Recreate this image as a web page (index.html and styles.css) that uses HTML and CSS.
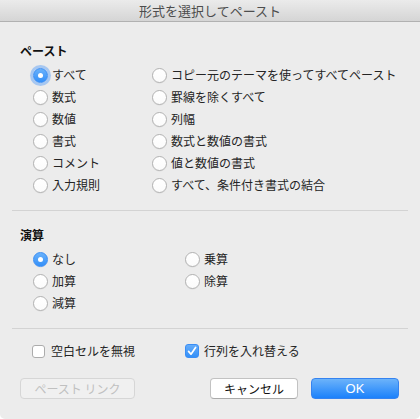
FILE: index.html
```html
<!DOCTYPE html>
<html lang="ja">
<head>
<meta charset="utf-8">
<link rel="stylesheet" href="styles.css">
</head>
<body>
<div class="window">
  <div class="titlebar">形式を選択してペースト</div>
  <div class="section paste">
    <div class="heading">ペースト</div>
    <div class="grid grid-paste">
      <label class="opt"><span class="radio on focus"></span>すべて</label>
      <label class="opt"><span class="radio"></span>コピー元のテーマを使ってすべてペースト</label>
      <label class="opt"><span class="radio"></span>数式</label>
      <label class="opt"><span class="radio"></span>罫線を除くすべて</label>
      <label class="opt"><span class="radio"></span>数値</label>
      <label class="opt"><span class="radio"></span>列幅</label>
      <label class="opt"><span class="radio"></span>書式</label>
      <label class="opt"><span class="radio"></span>数式と数値の書式</label>
      <label class="opt"><span class="radio"></span>コメント</label>
      <label class="opt"><span class="radio"></span>値と数値の書式</label>
      <label class="opt"><span class="radio"></span>入力規則</label>
      <label class="opt"><span class="radio"></span>すべて、条件付き書式の結合</label>
    </div>
  </div>
  <div class="sep"></div>
  <div class="section calc">
    <div class="heading">演算</div>
    <div class="grid grid-calc">
      <label class="opt"><span class="radio on"></span>なし</label>
      <label class="opt"><span class="radio"></span>乗算</label>
      <label class="opt"><span class="radio"></span>加算</label>
      <label class="opt"><span class="radio"></span>除算</label>
      <label class="opt"><span class="radio"></span>減算</label>
    </div>
  </div>
  <div class="sep"></div>
  <div class="checks">
    <label class="opt chk-opt"><span class="check"></span>空白セルを無視</label>
    <label class="opt chk-opt"><span class="check on"><svg viewBox="0 0 14 14" width="14" height="14"><path d="M3.6 7.4 L6 10.2 L10.6 3.4" fill="none" stroke="#fff" stroke-width="1.7" stroke-linecap="round" stroke-linejoin="round"/></svg></span>行列を入れ替える</label>
  </div>
  <div class="buttons">
    <div class="btn disabled">ペースト リンク</div>
    <div class="spacer"></div>
    <div class="btn cancel">キャンセル</div>
    <div class="btn ok">OK</div>
  </div>
</div>
</body>
</html>
```

FILE: styles.css
```css
html, body {
  margin: 0;
  padding: 0;
  background: #ffffff;
}
body {
  font-family: "Noto Sans CJK JP", "Noto Sans", sans-serif;
  color: #222222;
}
.window {
  width: 420px;
  height: 419px;
  background: #ececec;
  border-radius: 0 0 5px 5px;
  overflow: hidden;
  box-sizing: border-box;
}
.titlebar {
  height: 21px;
  line-height: 21px;
  border-bottom: 1px solid #b1b1b1;
  background: linear-gradient(#ebebeb, #d5d5d5);
  text-align: center;
  font-size: 13px;
  color: #4d4d4d;
}
.section {
  padding-left: 20px;
  padding-bottom: 14px;
}
.paste { padding-top: 21px; }
.calc { padding-top: 16px; }
.heading {
  font-size: 12px;
  font-weight: bold;
  line-height: 16px;
  height: 16px;
  color: #111;
  margin-bottom: 5px;
}
.grid {
  display: grid;
  padding-left: 13px;
  grid-auto-rows: 22px;
}
.grid-paste { grid-template-columns: 119px auto; }
.grid-calc { grid-template-columns: 152px auto; }
.opt {
  display: flex;
  align-items: center;
  font-size: 12px;
  line-height: 22px;
  height: 22px;
  white-space: nowrap;
  color: #242424;
}
.radio {
  width: 15px;
  height: 15px;
  box-sizing: border-box;
  border-radius: 50%;
  border: 1px solid #b2b2b2;
  background: linear-gradient(#ffffff, #fbfbfb);
  margin-right: 4px;
  flex: none;
  position: relative;
  box-shadow: 0 0.5px 0.5px rgba(0,0,0,0.08);
}
.radio.on {
  border-color: #3a8ef6;
  background: linear-gradient(#69b1fb, #3490f8);
}
.radio.on::after {
  content: "";
  position: absolute;
  left: 4px;
  top: 4px;
  width: 5px;
  height: 5px;
  border-radius: 50%;
  background: #fff;
}
.radio.focus {
  box-shadow: 0 0 0 3px rgba(110, 170, 245, 0.55);
}
.sep {
  height: 1px;
  background: #d3d3d3;
  margin: 0 12px;
}
.checks {
  display: grid;
  grid-template-columns: 153px auto;
  padding: 11px 0 0 32px;
}
.check {
  width: 13px;
  height: 13px;
  box-sizing: border-box;
  border: 1px solid #acacac;
  border-radius: 3px;
  background: #fff;
  margin-right: 6px;
  flex: none;
  position: relative;
}
.check.on {
  width: 14px;
  height: 14px;
  border-color: #3a8ef6;
  background: linear-gradient(#66adfa, #3490f8);
  margin-right: 5px;
}
.check svg {
  position: absolute;
  left: -1px;
  top: -1px;
}
.buttons {
  display: flex;
  padding: 16px 21px 0 20px;
  align-items: flex-start;
}
.spacer { flex: 1; }
.btn {
  height: 21px;
  box-sizing: border-box;
  border-radius: 4px;
  font-size: 12px;
  line-height: 19px;
  text-align: center;
}
.btn.disabled {
  width: 115px;
  border: 1px solid #d6d6d6;
  background: #f0f0f0;
  color: #c0c0c0;
}
.btn.cancel {
  width: 88px;
  border: 1px solid #c2c2c2;
  border-bottom-color: #aaaaaa;
  background: #ffffff;
  color: #111;
  margin-right: 13px;
}
.btn.ok {
  width: 88px;
  border: 1px solid #3583f0;
  background: linear-gradient(#6cb3fa, #1b81fb);
  color: #fff;
  font-family: "Liberation Sans", "Noto Sans", sans-serif;
  font-size: 13px;
}
```
